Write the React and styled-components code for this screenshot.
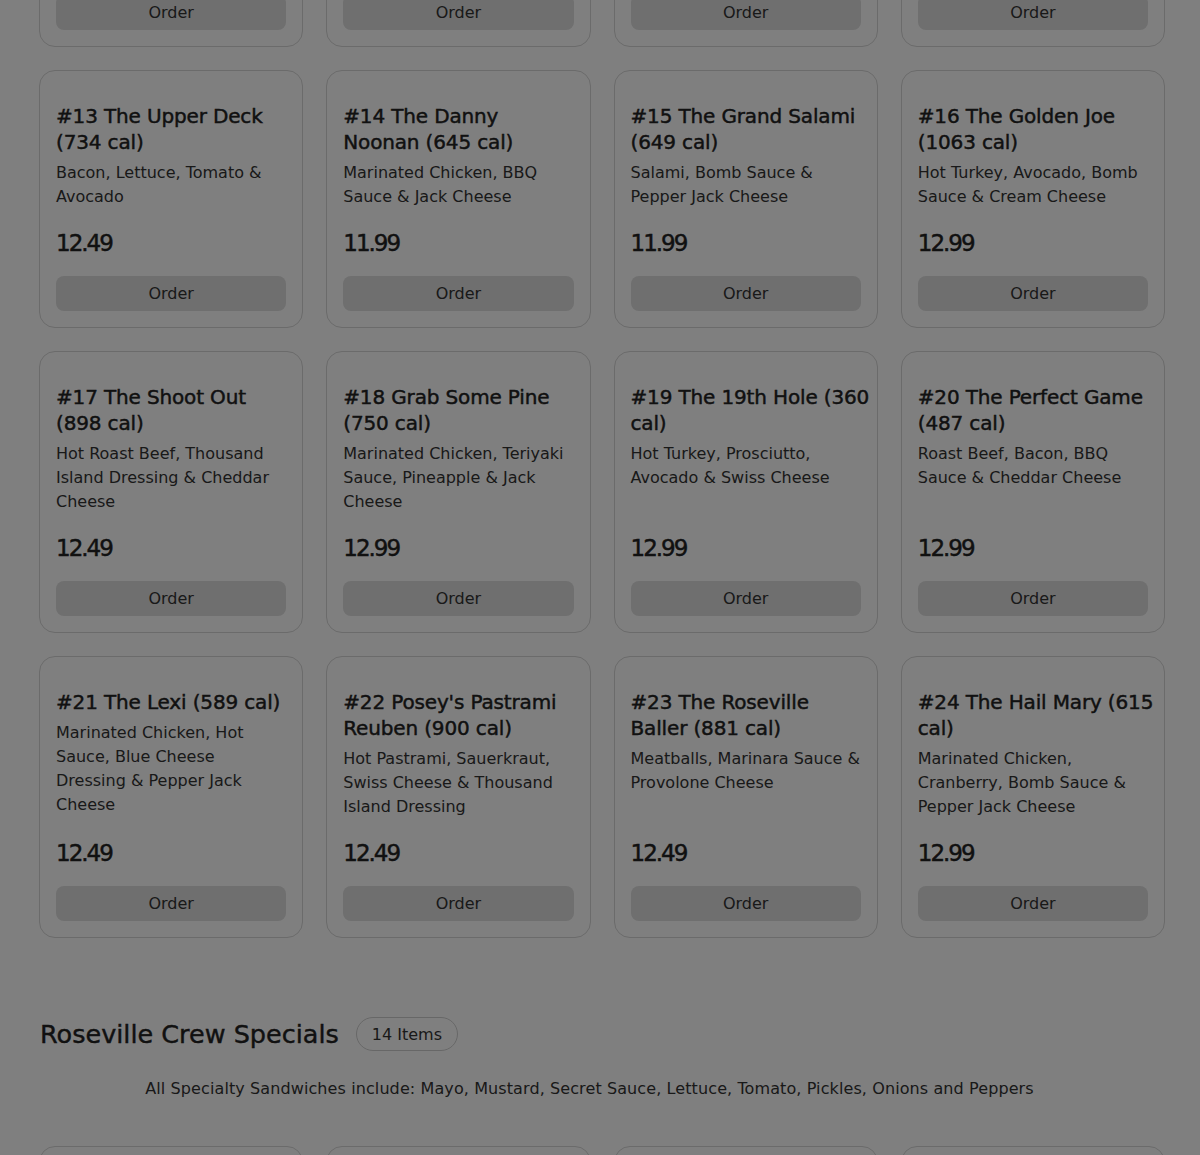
import styled, { createGlobalStyle } from "styled-components"

const GlobalStyle = createGlobalStyle`
    html, body {
        margin: 0;
        padding: 0;
        background: #ffffff;
        font-family: "DejaVu Sans", "Liberation Sans", sans-serif;
        color: #222;
        overflow: hidden;
    }
`

const Page = styled.div`
    width: 1126px;
    margin: -211px 0 0 39px;
`

const Grid = styled.div`
    display: grid;
    grid-template-columns: repeat(4, minmax(0, 1fr));
    gap: 23px;
`

const Card = styled.div`
    display: flex;
    flex-direction: column;
    min-width: 0;
    padding: 32px 16px 16px;
    border: 1px solid #d6d6d6;
    border-radius: 16px;
    background: #fff;
`

const Body = styled.div`
    flex: 1;
`

const Title = styled.h3`
    margin: 0;
    font-size: 20px;
    line-height: 26px;
    font-weight: 400;
    white-space: pre;
    letter-spacing: -0.15px;
    -webkit-text-stroke: 0.45px #222;
    color: #222;
`

const Desc = styled.p`
    margin: 6px 0 0;
    font-size: 16px;
    line-height: 24px;
    color: #333;
`

const Price = styled.div`
    margin-top: 20px;
    font-size: 23px;
    line-height: 28px;
    letter-spacing: -2px;
    -webkit-text-stroke: 0.45px #222;
    color: #222;
`

const OrderButton = styled.button`
    margin-top: 19px;
    height: 35px;
    width: 100%;
    border: none;
    border-radius: 8px;
    background: #dedede;
    font-family: inherit;
    font-size: 16px;
    color: #333;
`

const SectionHead = styled.div`
    display: flex;
    align-items: center;
    gap: 17px;
    margin-top: 79px;
    padding-left: 1px;
`

const SectionTitle = styled.h2`
    margin: 0;
    font-size: 25.5px;
    line-height: 34px;
    font-weight: 400;
    -webkit-text-stroke: 0.4px #222;
    color: #222;
`

const Badge = styled.span`
    display: inline-flex;
    align-items: center;
    height: 32px;
    padding: 0 15px;
    border: 1px solid #cfcfcf;
    border-radius: 999px;
    font-size: 16px;
    color: #333;
`

const Note = styled.p`
    margin: 26px 0 45px;
    padding-right: 25px;
    text-align: center;
    font-size: 16px;
    line-height: 24px;
    letter-spacing: 0.1px;
    color: #333;
`

const Backdrop = styled.div`
    position: fixed;
    inset: 0;
    background: rgba(0, 0, 0, 0.5);
`

const sandwiches = [
    { name: "#9 The Clubhouse\n(710 cal)", desc: "Ham, Turkey, Bacon & Swiss Cheese", price: "12.49" },
    { name: "#10 The Hat Trick\n(820 cal)", desc: "Roast Beef, Ham & Cheddar Cheese", price: "12.49" },
    { name: "#11 The Bullpen\n(690 cal)", desc: "Salami, Ham & Provolone Cheese", price: "11.99" },
    { name: "#12 The Full Court\n(760 cal)", desc: "Hot Turkey, Bacon & Swiss Cheese", price: "12.99" },
    { name: "#13 The Upper Deck\n(734 cal)", desc: "Bacon, Lettuce, Tomato & Avocado", price: "12.49" },
    { name: "#14 The Danny\nNoonan (645 cal)", desc: "Marinated Chicken, BBQ Sauce & Jack Cheese", price: "11.99" },
    { name: "#15 The Grand Salami\n(649 cal)", desc: "Salami, Bomb Sauce & Pepper Jack Cheese", price: "11.99" },
    { name: "#16 The Golden Joe\n(1063 cal)", desc: "Hot Turkey, Avocado, Bomb Sauce & Cream Cheese", price: "12.99" },
    { name: "#17 The Shoot Out\n(898 cal)", desc: "Hot Roast Beef, Thousand Island Dressing & Cheddar Cheese", price: "12.49" },
    { name: "#18 Grab Some Pine\n(750 cal)", desc: "Marinated Chicken, Teriyaki Sauce, Pineapple & Jack Cheese", price: "12.99" },
    { name: "#19 The 19th Hole (360\ncal)", desc: "Hot Turkey, Prosciutto, Avocado & Swiss Cheese", price: "12.99" },
    { name: "#20 The Perfect Game\n(487 cal)", desc: "Roast Beef, Bacon, BBQ Sauce & Cheddar Cheese", price: "12.99" },
    { name: "#21 The Lexi (589 cal)", desc: "Marinated Chicken, Hot Sauce, Blue Cheese Dressing & Pepper Jack Cheese", price: "12.49" },
    { name: "#22 Posey's Pastrami\nReuben (900 cal)", desc: "Hot Pastrami, Sauerkraut, Swiss Cheese & Thousand Island Dressing", price: "12.49" },
    { name: "#23 The Roseville\nBaller (881 cal)", desc: "Meatballs, Marinara Sauce & Provolone Cheese", price: "12.49" },
    { name: "#24 The Hail Mary (615\ncal)", desc: "Marinated Chicken, Cranberry, Bomb Sauce & Pepper Jack Cheese", price: "12.99" },
]

const crew = [
    { name: "#1 The Captain\n(780 cal)", desc: "Turkey, Ham, Bacon & Swiss Cheese", price: "12.99" },
    { name: "#2 The First Mate\n(640 cal)", desc: "Hot Turkey, Avocado & Pepper Jack Cheese", price: "12.49" },
    { name: "#3 The Deckhand\n(590 cal)", desc: "Salami, Ham & Provolone Cheese", price: "11.99" },
    { name: "#4 The Navigator\n(720 cal)", desc: "Roast Beef, Bomb Sauce & Cheddar Cheese", price: "12.99" },
]

const MenuCard = ({ item }) => (
    <Card>
        <Body>
            <Title>{item.name}</Title>
            <Desc>{item.desc}</Desc>
        </Body>
        <Price>{item.price}</Price>
        <OrderButton>Order</OrderButton>
    </Card>
)

const App = () => {
    return (
        <>
            <GlobalStyle />
            <Page>
                <Grid>
                    {sandwiches.map((item) => <MenuCard key={item.name} item={item} />)}
                </Grid>

                <SectionHead>
                    <SectionTitle>Roseville Crew Specials</SectionTitle>
                    <Badge>14 Items</Badge>
                </SectionHead>
                <Note>All Specialty Sandwiches include: Mayo, Mustard, Secret Sauce, Lettuce, Tomato, Pickles, Onions and Peppers</Note>

                <Grid>
                    {crew.map((item) => <MenuCard key={item.name} item={item} />)}
                </Grid>
            </Page>
            <Backdrop />
        </>
    )
}

export default App
